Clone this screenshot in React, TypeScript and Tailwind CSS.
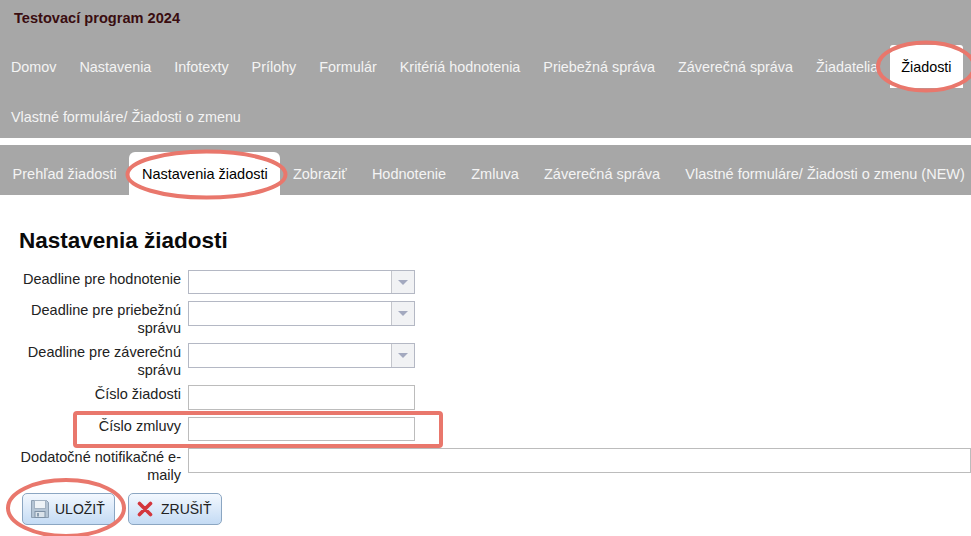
import React from 'react';

const mainNav = ['Domov', 'Nastavenia', 'Infotexty', 'Prílohy', 'Formulár', 'Kritériá hodnotenia', 'Priebežná správa', 'Záverečná správa', 'Žiadatelia', 'Žiadosti', 'Vlastné formuláre/ Žiadosti o zmenu'];
const subNav = ['Prehľad žiadosti', 'Nastavenia žiadosti', 'Zobraziť', 'Hodnotenie', 'Zmluva', 'Záverečná správa', 'Vlastné formuláre/ Žiadosti o zmenu (NEW)'];

const fields = [
  { label: 'Deadline pre hodnotenie', row: 'h-[31px]', input: 'h-[24px] w-[227px] border-[#b4b8c4]', combo: true },
  { label: 'Deadline pre priebežnú správu', row: 'h-[42px]', input: 'h-[25px] w-[227px] border-[#b4b8c4]', combo: true },
  { label: 'Deadline pre záverečnú správu', row: 'h-[42px]', input: 'h-[25px] w-[227px] border-[#b4b8c4]', combo: true },
  { label: 'Číslo žiadosti', row: 'h-[32px]', input: 'h-[25px] w-[227px] border-[#bcbcbc]', combo: false },
  { label: 'Číslo zmluvy', row: 'h-[31px]', input: 'h-[24px] w-[227px] border-[#bcbcbc]', combo: false },
  { label: 'Dodatočné notifikačné e-maily', row: 'h-[45px]', input: 'h-[25px] flex-1 border-[#bcbcbc]', combo: false },
];

function FloppyIcon() {
  return (
    <svg width="18" height="18" viewBox="0 0 18 18">
      <path d="M.5.5h15l2 2v15H.5z" fill="#b4c4d4" stroke="#8d9fb2" />
      <rect x="3.5" y=".5" width="11" height="8" fill="#eef3f7" stroke="#a3b2c2" />
      <rect x="4" y="11.5" width="10" height="6" fill="#dbe3ea" stroke="#7f92a6" />
      <rect x="6" y="13" width="2" height="3.5" fill="#8a9db0" />
    </svg>
  );
}

function CrossIcon() {
  return (
    <svg width="16" height="16" viewBox="0 0 16 16">
      <path d="M2.5 2.5 L13.5 13.5 M13.5 2.5 L2.5 13.5" stroke="#d3363c" strokeWidth="3.6" strokeLinecap="round" />
    </svg>
  );
}

export default function App() {
  return (
    <div className="relative h-[536px] w-[971px] overflow-hidden bg-white font-['Liberation_Sans',Arial,sans-serif] text-[14.5px]">
      <div className="h-[138px] bg-[#a7a7a7]">
        <div className="h-[45px] pl-[14px] pt-[10px] text-[14.6px] leading-[16px] font-bold text-[#3a0d10]">Testovací program 2024</div>
        <div className="flex flex-wrap gap-x-[1px] gap-y-[7px] text-[14.36px]">
          {mainNav.map((item) => (
            <a key={item} className={`flex h-[43px] items-center px-[11px] pt-[2px] ${item === 'Žiadosti' ? 'rounded-t-[3px] bg-white text-black' : 'text-[#f4f4f4]'}`}>
              {item}
            </a>
          ))}
        </div>
      </div>

      <div className="mt-[7px] flex h-[50px] items-end whitespace-nowrap bg-[#a7a7a7]">
        {subNav.map((item) => (
          <a key={item} className={`flex h-[43px] items-center px-[12.6px] pt-[2px] ${item === 'Nastavenia žiadosti' ? 'rounded-t-[6px] bg-white text-black' : 'text-[#f4f4f4]'}`}>
            {item}
          </a>
        ))}
      </div>

      <div className="pt-[32px]">
        <h1 className="h-[43px] pl-[19px] text-[22.5px] leading-[28px] font-bold text-[#0a0a0a]">Nastavenia žiadosti</h1>
        {fields.map((field) => (
          <div key={field.label} className={`flex ${field.row}`}>
            <label className="w-[181px] shrink-0 pl-[12px] text-right leading-[18px] text-[#222]">{field.label}</label>
            <div className={`ml-[7px] flex border bg-white ${field.input}`}>
              {field.combo && (
                <div className="ml-auto flex w-[23px] items-center justify-center border-l border-[#c4c6cc] bg-[#f1f2f4]">
                  <div className="h-0 w-0 border-x-[5px] border-t-[5px] border-x-transparent border-t-[#a3a9bf]" />
                </div>
              )}
            </div>
          </div>
        ))}
        <div className="flex gap-[13px] pl-[22px] text-[14px]">
          <button className="flex h-[32px] w-[93px] items-center gap-[6px] rounded-[5px] border border-[#8ba6c2] bg-gradient-to-b from-[#f3f8fe] to-[#c4dbf4] pl-[8px] text-[#222]">
            <FloppyIcon />ULOŽIŤ
          </button>
          <button className="flex h-[32px] w-[94px] items-center gap-[8px] rounded-[5px] border border-[#8ba6c2] bg-gradient-to-b from-[#f3f8fe] to-[#c4dbf4] pl-[8px] text-[#222]">
            <CrossIcon />ZRUŠIŤ
          </button>
        </div>
      </div>

      {/* red annotations drawn over the screenshot */}
      <svg className="pointer-events-none absolute inset-0" width="971" height="536" fill="none" stroke="#e9776c" strokeWidth="4">
        <ellipse cx="926" cy="66.5" rx="48" ry="24" />
        <ellipse cx="206.5" cy="174.5" rx="79" ry="23" />
        <rect x="75" y="413" width="366" height="33" rx="2" />
        <ellipse cx="66" cy="508" rx="58" ry="28" />
      </svg>
    </div>
  );
}
